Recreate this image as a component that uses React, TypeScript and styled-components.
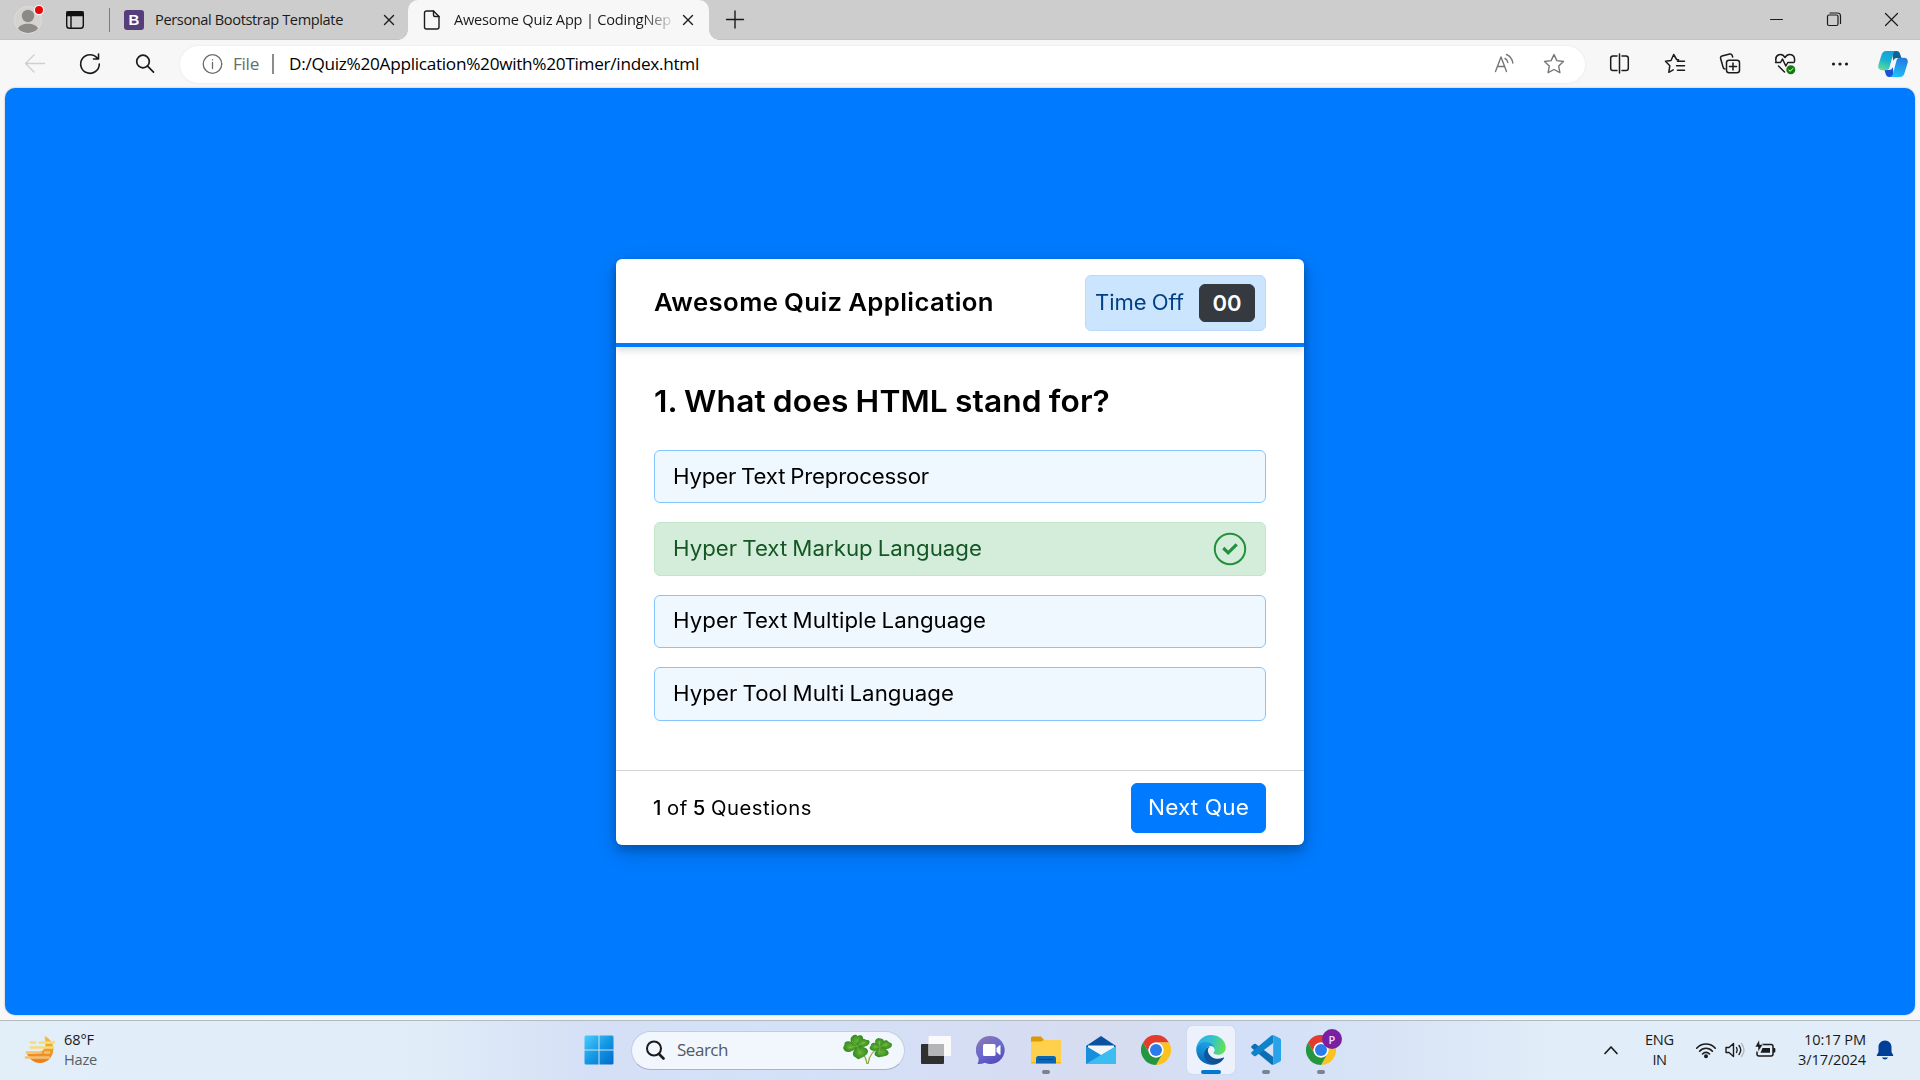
import React, { useLayoutEffect, useRef, useState } from "react";
import styled, { createGlobalStyle } from "styled-components";

const UI = `"Open Sans", "Noto Sans", sans-serif`;
const QUIZ = `Inter, "Noto Sans", sans-serif`;

const Global = createGlobalStyle`
  *, *::before, *::after { box-sizing: border-box; }
  html, body { margin: 0; padding: 0; overflow: hidden; }
  body { font-family: ${UI}; color: #000; }
  svg { display: block; flex: none; }
`;

/* Text run tracked so that it fills a given measure; stretch widens the letters. */
const Run = styled.span<{ $w: number; $spacing: number; $stretch: number }>`
  display: block;
  flex: none;
  width: ${(p) => p.$w / p.$stretch}px;
  margin-right: ${(p) => p.$w - p.$w / p.$stretch}px;
  white-space: pre;
  letter-spacing: ${(p) => p.$spacing}px;
  ${(p) => (p.$stretch !== 1 ? `transform: scaleX(${p.$stretch}); transform-origin: 0 50%;` : "")}
`;

function Tracked({ width, stretch = 1, children }: { width: number; stretch?: number; children: React.ReactNode }) {
  const ref = useRef<HTMLSpanElement>(null);
  const [spacing, setSpacing] = useState(0);
  useLayoutEffect(() => {
    const el = ref.current;
    if (!el) return;
    const range = document.createRange();
    range.selectNodeContents(el);
    const natural = range.getBoundingClientRect().width;
    const count = (el.textContent || "").length;
    setSpacing((width - natural) / stretch / count);
  }, [width, stretch]);
  return (
    <Run ref={ref} $w={width} $spacing={spacing} $stretch={stretch}>
      {children}
    </Run>
  );
}

/* ---------- window shell ---------- */

const Screen = styled.div`
  width: 1920px;
  height: 1080px;
  display: flex;
  flex-direction: column;
  background: #f7f7f7;
  overflow: hidden;
`;

const TabStrip = styled.div`
  height: 40px;
  display: flex;
  align-items: center;
  background: #cdcdcd;
  box-shadow: inset 0 -1px 0 #c3c3c3;
`;

const Tab = styled.div<{ $active?: boolean }>`
  position: relative;
  height: 40px;
  width: ${(p) => (p.$active ? 301 : 298)}px;
  display: flex;
  align-items: center;
  padding-left: 14px;
  border-radius: 10px 10px 0 0;
  background: ${(p) => (p.$active ? "#f7f7f7" : "transparent")};
  font-size: 14.6px;
  line-height: 20px;
  color: #1b1b1b;
  &::before,
  &::after {
    content: "";
    display: ${(p) => (p.$active ? "block" : "none")};
    position: absolute;
    bottom: 0;
    width: 10px;
    height: 10px;
  }
  &::before {
    left: -10px;
    background: radial-gradient(circle at 0 0, transparent 9.5px, #f7f7f7 10px);
  }
  &::after {
    right: -10px;
    background: radial-gradient(circle at 100% 0, transparent 9.5px, #f7f7f7 10px);
  }
`;

const TabTitle = styled.div<{ $ml: number; $fade?: boolean }>`
  margin-left: ${(p) => p.$ml}px;
  margin-right: auto;
  padding-bottom: 2px;
  ${(p) => (p.$fade ? "mask-image: linear-gradient(90deg, #000 188px, transparent 222px);" : "")}
`;

const TabClose = styled.div<{ $mr: number }>`
  margin-right: ${(p) => p.$mr}px;
`;

const Divider = styled.div`
  width: 1px;
  height: 24px;
  margin-left: 22px;
  background: #7b7b7b;
`;

const WindowButtons = styled.div`
  margin-left: auto;
  margin-right: 12px;
  display: flex;
  gap: 28px;
`;

const Toolbar = styled.div`
  height: 48px;
  display: flex;
  align-items: center;
  padding: 0 0 0 20px;
`;

const IconRow = styled.div<{ $gap: number }>`
  display: flex;
  align-items: center;
  gap: ${(p) => p.$gap}px;
`;

const AddressBar = styled.div`
  width: 1405px;
  height: 37px;
  margin: 0 20px;
  padding: 0 16px 0 18px;
  display: flex;
  align-items: center;
  border-radius: 19px;
  background: #fff;
  box-shadow: 0 0 3px rgba(0, 0, 0, 0.07);
  font-size: 17.2px;
  line-height: 24px;
`;

const Scheme = styled.div`
  margin-left: 5px;
  color: #6b6b6b;
`;

const Bar = styled.div`
  width: 2px;
  height: 20px;
  margin: 0 15px 0 13px;
  background: #8c8c8c;
`;

const Spacer = styled.div`
  flex: 1;
`;

const CopilotSlot = styled.div`
  margin-left: -2px;
`;

const Page = styled.main`
  width: 1910px;
  height: 927px;
  margin: 0 5px 5px;
  padding-top: 171px;
  display: flex;
  justify-content: center;
  align-items: flex-start;
  border-radius: 10px;
  background: #007bff;
  box-shadow: 0 0 2px rgba(0, 0, 0, 0.3);
`;

/* ---------- quiz card ---------- */

const Card = styled.section`
  width: 688px;
  height: 586px;
  display: flex;
  flex-direction: column;
  border-radius: 6px;
  background: #fff;
  font-family: ${QUIZ};
  word-spacing: -0.07em;
  box-shadow: 0 5px 10px rgba(0, 0, 0, 0.2), 0 7px 25px rgba(0, 0, 0, 0.19);
`;

const CardHeader = styled.header`
  height: 88px;
  display: flex;
  align-items: center;
  justify-content: space-between;
  padding: 0 38px;
  border-bottom: 4px solid #007bff;
  border-radius: 6px 6px 0 0;
  box-shadow: 0 4px 6px rgba(0, 0, 0, 0.12);
`;

const Title = styled.h1`
  margin: 2px 0 0;
  font-size: 24.5px;
  line-height: 36px;
  font-weight: 600;
`;

const Timer = styled.div`
  width: 181px;
  height: 56px;
  margin-top: 3px;
  padding: 0 10px 0 9px;
  display: flex;
  align-items: center;
  justify-content: space-between;
  border: 1px solid #b8daff;
  border-radius: 6px;
  background: #cce5ff;
  color: #004085;
  font-size: 21px;
`;

const Seconds = styled.div`
  width: 56px;
  height: 38px;
  display: flex;
  align-items: center;
  justify-content: center;
  border: 1px solid #343a40;
  border-radius: 6px;
  background: #343a40;
  color: #fff;
  font-size: 22px;
  font-weight: 600;
`;

const CardBody = styled.div`
  height: 423px;
  padding: 32px 38px 0;
`;

const Question = styled.h2`
  margin: 0 0 27px;
  height: 44px;
  font-size: 30.5px;
  line-height: 44px;
  font-weight: 600;
`;

const Options = styled.div`
  display: flex;
  flex-direction: column;
  gap: 19px;
`;

const Option = styled.div<{ $correct?: boolean }>`
  height: 53.4px;
  padding: 0 18px;
  display: flex;
  align-items: center;
  justify-content: space-between;
  border: 1px solid ${(p) => (p.$correct ? "#c3e6cb" : "#84c5fe")};
  border-radius: 6px;
  background: ${(p) => (p.$correct ? "#d4edda" : "#f0f8ff")};
  color: ${(p) => (p.$correct ? "#155724" : "#000")};
  font-size: 21px;
  line-height: 30px;
`;

const CardFooter = styled.footer`
  height: 75px;
  display: flex;
  align-items: center;
  justify-content: space-between;
  padding: 0 38px 0 37px;
  border-top: 1px solid #d3d3d3;
  font-size: 19.5px;
  b { font-weight: 500; }
`;

const NextButton = styled.button`
  width: 135px;
  height: 50px;
  padding: 0 0 2px;
  display: flex;
  align-items: center;
  justify-content: center;
  border: 1px solid #007bff;
  border-radius: 6px;
  background: #007bff;
  color: #fff;
  font: 400 21.5px ${QUIZ};
`;

/* ---------- taskbar ---------- */

const Taskbar = styled.footer`
  height: 60px;
  display: grid;
  grid-template-columns: 575px 778px 1fr;
  border-top: 1px solid #b4bac2;
  background: linear-gradient(90deg, #e2eef8 0, #e0edf8 420px, #d5dff6 590px, #d3e2f8 760px, #d5def5 930px, #d7dcf0 1100px, #d3e0f7 1250px, #d8e3f6 1380px, #e1edf8 1560px, #e2edf8 100%);
  font-size: 14.6px;
  line-height: 20px;
  color: #1a1a1a;
`;

const Weather = styled.div`
  display: flex;
  align-items: center;
  padding: 0 0 1px 24px;
`;

const Stack = styled.div<{ $ml?: number; $align?: string }>`
  display: flex;
  flex-direction: column;
  padding-bottom: 3px;
  margin-left: ${(p) => p.$ml || 0}px;
  align-items: ${(p) => p.$align || "flex-start"};
`;

const Muted = styled.div`
  color: #56606a;
`;

const Apps = styled.div`
  display: flex;
  align-items: center;
  gap: 7px;
  padding-bottom: 1px;
`;

const AppSlot = styled.div<{ $active?: boolean }>`
  width: 48px;
  height: 48px;
  position: relative;
  display: flex;
  align-items: center;
  justify-content: center;
  border-radius: 5px;
  background: ${(p) => (p.$active ? "#ecf1fb" : "transparent")};
  box-shadow: ${(p) => (p.$active ? "0 0 1px #aab4c8" : "none")};
`;

const Running = styled.i<{ $active?: boolean }>`
  position: absolute;
  bottom: 0;
  left: 50%;
  width: ${(p) => (p.$active ? 20 : 8)}px;
  height: 4px;
  transform: translateX(-50%);
  border-radius: 2px;
  background: ${(p) => (p.$active ? "#0078d4" : "#7d828c")};
`;

const ProfileBadge = styled.span`
  position: absolute;
  top: 3px;
  right: 3px;
  width: 20px;
  height: 20px;
  display: flex;
  align-items: center;
  justify-content: center;
  border-radius: 50%;
  background: #7b1fa2;
  color: #f0dcf5;
  font: 600 11px ${UI};
`;

const SearchBox = styled.div`
  width: 274px;
  height: 39px;
  margin-left: 1px;
  padding: 0 11px 0 13px;
  display: flex;
  align-items: center;
  border: 1px solid #c4cce3;
  border-bottom-color: #a9b2cb;
  border-radius: 20px;
  background: #f2f6fd;
  color: #55585f;
  font-size: 17px;
`;

const SearchLabel = styled.div`
  margin-left: 12px;
  margin-right: auto;
`;

const Tray = styled.div`
  display: flex;
  align-items: center;
  justify-content: flex-end;
  padding: 0 26px 1px 0;
`;

const TrayIcons = styled.div`
  display: flex;
  gap: 7px;
  margin: 0 21px 0 21px;
`;

const Bell = styled.div`
  margin-left: 10px;
`;

/* ---------- drawings ---------- */

type IconProps = { w?: number; h?: number; children: React.ReactNode; sw?: number; color?: string };
const Icon = ({ w = 30, h = 30, children, sw = 1.4, color = "#1b1b1b" }: IconProps) => (
  <svg width={w} height={h} viewBox={`0 0 ${w} ${h}`} fill="none" stroke={color} strokeWidth={sw} strokeLinecap="round" strokeLinejoin="round">
    {children}
  </svg>
);

const Cross = () => (
  <Icon w={12} h={12}>
    <path d="M1.500 1.500l9 9M10.500 1.500l-9 9" />
  </Icon>
);

const STAR = "M15 5.600l2.900 6 6.600.9-4.800 4.600 1.200 6.600-5.900-3.200-5.900 3.200 1.200-6.600-4.800-4.600 6.600-.9z";

const Chrome = () => (
  <svg width="30" height="30" viewBox="0 0 48 48">
    <path fill="#e33b2e" d="M3.200 12A24 24 0 0 1 44.800 12H24A12 12 0 0 0 13.600 30z" />
    <path fill="#fcc31e" d="M44.800 12H24A12 12 0 0 1 34.400 30L24 48A24 24 0 0 0 44.800 12z" />
    <path fill="#24963f" d="M3.200 12L13.600 30A12 12 0 0 0 34.400 30L24 48A24 24 0 0 1 3.200 12z" />
    <circle cx="24" cy="24" r="12" fill="#fff" />
    <circle cx="24" cy="24" r="9.600" fill="#2c7bea" />
  </svg>
);

const Edge = () => (
  <svg width="30" height="30" viewBox="0 0 256 260">
    <defs>
      <linearGradient id="e1" x1="60" y1="180" x2="240" y2="180" gradientUnits="userSpaceOnUse">
        <stop offset="0" stopColor="#0c59a4" />
        <stop offset="1" stopColor="#114a8b" />
      </linearGradient>
      <linearGradient id="e2" x1="100" y1="80" x2="50" y2="240" gradientUnits="userSpaceOnUse">
        <stop offset="0" stopColor="#1b9de2" />
        <stop offset="0.5" stopColor="#1386d2" />
        <stop offset="1" stopColor="#0564b4" />
      </linearGradient>
      <linearGradient id="e3" x1="20" y1="60" x2="245" y2="120" gradientUnits="userSpaceOnUse">
        <stop offset="0" stopColor="#2fb0e6" />
        <stop offset="0.500" stopColor="#35c5c6" />
        <stop offset="1" stopColor="#66e155" />
      </linearGradient>
    </defs>
    <path fill="url(#e1)" d="M235.680 195.460a93.730 93.730 0 0 1-10.540 4.710 101.870 101.870 0 0 1-35.900 6.460c-47.320 0-88.540-32.550-88.540-74.320A31.480 31.480 0 0 1 117.130 105c-42.800 1.800-53.800 46.400-53.800 72.530 0 73.880 68.090 81.370 82.760 81.370 7.910 0 19.840-2.300 27-4.560l1.310-.44a128.340 128.340 0 0 0 66.600-52.800 4 4 0 0 0-5.320-5.640z" />
    <path fill="url(#e2)" d="M105.730 241.420A79.200 79.200 0 0 1 83 220.080a80.720 80.720 0 0 1 29.500-120.790c3.120-1.470 8.450-4.130 15.540-4a32.350 32.350 0 0 1 25.690 13 31.880 31.880 0 0 1 6.360 18.660c0-.21 24.460-79.600-80-79.600-43.900 0-80 41.660-80 78.210a130.150 130.150 0 0 0 12.110 56 128 128 0 0 0 156.380 67.110 75.550 75.550 0 0 1-62.780-8z" />
    <path fill="url(#e3)" d="M152.330 148.860c-.81 1.050-3.300 2.500-3.300 5.660 0 2.610 1.700 5.120 4.720 7.230 14.380 10 41.490 8.680 41.560 8.680a59.560 59.560 0 0 0 30.270-8.350A61.380 61.380 0 0 0 256 109.170c.26-22.410-8-37.310-11.340-43.910C223.460 23.840 177.720 0 128 0A128 128 0 0 0 0 126.200c.48-36.540 36.800-66.050 80-66.050 3.500 0 23.460.34 42 10.070 16.340 8.580 24.900 18.940 30.850 29.210 6.180 10.670 7.280 24.150 7.280 29.520s-2.740 13.330-7.800 19.910z" />
  </svg>
);

const VsCode = () => (
  <svg width="30" height="30" viewBox="0 0 100 100">
    <path fill="#0b6fb8" d="M2 37l8-7q3-2 6 0l58 43v26l-6-1L2 43q-3-3 0-6z" />
    <path fill="#0f82cc" d="M2 63l8 7q3 2 6 0l58-43V1l-6 1L2 57q-3 3 0 6z" />
    <path fill="#28a3ea" d="M70 99q4 1 6 0l20-10q4-2 4-6V17q0-4-4-6L76 1q-2-1-6 0 4 1 4 5v88q0 4-4 5z" />
  </svg>
);

const Copilot = () => (
  <svg width="30" height="28" viewBox="0 0 30 28">
    <defs>
      <linearGradient id="c1" x1="12" y1="1" x2="5" y2="20" gradientUnits="userSpaceOnUse">
        <stop offset="0" stopColor="#12a0e0" />
        <stop offset="0.500" stopColor="#1cb1cf" />
        <stop offset="1" stopColor="#5bdc98" />
      </linearGradient>
      <linearGradient id="c2" x1="26" y1="8" x2="20" y2="27" gradientUnits="userSpaceOnUse">
        <stop offset="0" stopColor="#2876e2" />
        <stop offset="1" stopColor="#1bc0f7" />
      </linearGradient>
    </defs>
    <path fill="#10638f" d="M14 1h4.500c2 0 3 1 3.600 3l1.300 4h-4c-2.500 0-3.500 1-4.200 3z" />
    <path fill="#1e50d8" d="M15.500 27h-4.200c-2 0-3-1-3.600-3L6.500 20h4.200c2.300 0 3.500-1 4.200-3z" />
    <path fill="url(#c1)" d="M8 1h10.500c-2 0-2.800 1.200-3.400 3.200L11.500 17.500c-.6 1.800-1.600 2.700-3.500 2.700H4C1 20.200-.4 18 .4 15L3.300 5.500C4.200 2.500 5.500 1 8 1z" />
    <path fill="url(#c2)" d="M22 27H11.500c2 0 2.800-1.200 3.400-3.200L18.500 10.500c.6-1.800 1.600-2.700 3.500-2.700h4c3 0 4.400 2.200 3.600 5.200L26.700 22.500c-.9 3-2.200 4.500-4.700 4.500z" />
  </svg>
);

const Shamrocks = () => (
  <svg width="50" height="32" viewBox="0 0 50 32">
    <defs>
      <radialGradient id="leaf">
        <stop offset="0" stopColor="#69b234" />
        <stop offset="1" stopColor="#348b22" />
      </radialGradient>
    </defs>
    <g fill="none" stroke="#8aad3c" strokeWidth="1.300">
      <path d="M14 13c5 4 9 9 10 17M37 14c-6 2-11 7-12 16" />
    </g>
    <g fill="url(#leaf)">
      <path d="M14 12.500C7 11 6 4 9.500 2c2-2 4-1 5 0 4-2 7 1 5 5z" />
      <path d="M13.500 12.500c1-7 6-9 9-7 1 1 3 0 4 1.500 1 4-5 7-12 6z" />
      <path d="M14 12.500C9 6 1.500 6 1.500 10c0 2-2 3-1 5 2 4.500 8 4 14-2z" />
      <path d="M14 12c-5 5-5 10-2 11 2 1 3 3 4 2 4-2 9-4 9-8 0-3-6-5-11-5z" />
      <path d="M37 13.500c-6-3-6-8-2.500-9 1-1 2 0 3 0 4 0 5 5 0 9z" />
      <path d="M37 13.500c0-6 6-8.500 8-6.500 0 1 4 2 4 3.500 0 4-6 6-12 3.500z" />
      <path d="M37 13.500c-3-6.500-9-5.500-9-2.500 0 1-2 2-1 4 2 3 7 2 10-1z" />
      <path d="M37 13c-5 3-7 8-4 9 1 0 2 2 4 1 3 0 4-1 5-1 6-1 5-7-5-9z" />
    </g>
    <path d="M14 12L9 7M14 12l8-4M14 12l-9 2M14 12l3 8M37 13l-1-6M37 13l7-3M37 13l-6 0M37 13l-1 7" stroke="#96ca58" strokeWidth=".7" opacity=".7" />
  </svg>
);

/* ---------- sections ---------- */

const options = [
  { text: "Hyper Text Preprocessor", width: 256 },
  { text: "Hyper Text Markup Language", width: 309, correct: true },
  { text: "Hyper Text Multiple Language", width: 313 },
  { text: "Hyper Tool Multi Language", width: 281 },
];

function Tabs() {
  return (
    <TabStrip>
      <svg width="46" height="40" viewBox="0 0 46 40">
        <circle cx="28" cy="20" r="13.500" fill="#d5d3d0" stroke="#dedddb" />
        <circle cx="28" cy="16" r="6.200" fill="#8c8a87" />
        <path d="M18 28.500c2-6.500 18-6.500 20 0a13.500 13.500 0 0 1-20 0z" fill="#8c8a87" />
        <circle cx="39" cy="10" r="4.600" fill="#e8070b" stroke="#f5f5f5" strokeWidth="1.200" />
      </svg>
      <svg width="41" height="40" viewBox="46 0 41 40" fill="none" stroke="#111" strokeWidth="1.400">
        <rect x="66.700" y="11.700" width="16.600" height="16.600" rx="2.800" />
        <path d="M67 12h16v3.500H67z" fill="#111" />
        <path d="M71 15v13" />
      </svg>
      <Divider />
      <Tab>
        <svg width="21" height="20" viewBox="0 0 21 20">
          <rect width="20" height="20" rx="3" fill="#563d7c" />
          <text x="10" y="15.200" fill="#fff" fontFamily="Liberation Sans, sans-serif" fontSize="15" fontWeight="700" textAnchor="middle">B</text>
        </svg>
        <TabTitle $ml={10}>
          <Tracked width={188}>Personal Bootstrap Template</Tracked>
        </TabTitle>
        <TabClose $mr={13}><Cross /></TabClose>
      </Tab>
      <Tab $active>
        <Icon w={20} h={22}>
          <path d="M4.500 2h7L17 7.500V18a2 2 0 0 1-2 2H4.500a2 2 0 0 1-2-2V4a2 2 0 0 1 2-2z" />
          <path d="M11.500 2v4a1.500 1.500 0 0 0 1.500 1.500h4" />
        </Icon>
        <TabTitle $ml={12} $fade>
          <Tracked width={217}>Awesome Quiz App | CodingNep</Tracked>
        </TabTitle>
        <TabClose $mr={15}><Cross /></TabClose>
      </Tab>
      <Icon w={52} h={40}>
        <path d="M26 11v17M17.500 19.500h17" />
      </Icon>
      <WindowButtons>
        <Icon h={40} sw={1}><path d="M8.500 19.500h12" /></Icon>
        <Icon h={40} sw={1.200}>
          <rect x="7.500" y="15" width="10.500" height="10.500" rx="1.500" />
          <path d="M10 13h7.500a3 3 0 0 1 3 3v7.500" />
        </Icon>
        <Icon h={40} sw={1.200}><path d="M7.500 13.500l12 12M19.500 13.500l-12 12" /></Icon>
      </WindowButtons>
    </TabStrip>
  );
}

function Tools() {
  return (
    <Toolbar>
      <IconRow $gap={25}>
        <Icon color="#cfcfcf"><path d="M24.500 14.500H6M14 6l-8.500 8.500L14 23" /></Icon>
        <Icon sw={1.600}><path d="M22.500 9.500A9.300 9.300 0 1 0 24.300 15M23.500 5v5h-5" /></Icon>
        <Icon sw={1.700}><circle cx="13" cy="12.500" r="6.300" /><path d="M17.600 17.200l5.900 5.900" /></Icon>
      </IconRow>
      <AddressBar>
        <Icon color="#6b6b6b" sw={1.300}>
          <circle cx="14.500" cy="15" r="9.300" /><path d="M14.500 13.500v6M14.500 10.600v.3" />
        </Icon>
        <Scheme><Tracked width={26}>File</Tracked></Scheme>
        <Bar />
        <Tracked width={410}>D:/Quiz%20Application%20with%20Timer/index.html</Tracked>
        <Spacer />
        <IconRow $gap={19}>
          <Icon color="#767676">
            <path d="M5.500 22.500L11 8l5.500 14.500M7.300 17.500h7.400" />
            <path d="M15 9.500c1.500.7 2.500 2 2.800 4M16.500 5.500c3.500 1.500 5.700 4.500 6.300 8.500" />
          </Icon>
          <Icon color="#767676"><path d={STAR} /></Icon>
        </IconRow>
      </AddressBar>
      <IconRow $gap={25}>
        <Icon sw={1.500}>
          <path d="M12 7H8a2.300 2.300 0 0 0-2.300 2.300v10A2.300 2.300 0 0 0 8 21.600h4M17 7h4a2.300 2.300 0 0 1 2.300 2.300v10a2.300 2.300 0 0 1-2.300 2.300h-4M14.500 5v19" />
        </Icon>
        <Icon sw={1.500}>
          <path d="M18.500 10.800l-1.900-.3L13.700 5.500l-2.700 6-5.500.8 4.300 4.500-1 6.500 4.400-2.400M17.500 12.300h7M16.500 16.800h8M17.500 21.300h7" />
        </Icon>
        <Icon sw={1.500}>
          <rect x="11.500" y="11.200" width="13" height="12.500" rx="2.500" />
          <path d="M18 14v7M14.500 17.500h7M17.700 8l-.6-1.700A2 2 0 0 0 14.700 5L7 7a2 2 0 0 0-1.400 2.500l2.600 9c.3 1 .9 1.500 1.800 1.500" />
        </Icon>
        <Icon sw={1.500}>
          <path d="M6 12.500C4.500 5 12 3.500 15 8.500 18 3.500 25.500 5 24.500 12.500M5.500 13.500h5l2-3.500 3.300 7 2-3.500H24M8.500 17l6 6" />
          <circle cx="20.800" cy="20.800" r="4.500" fill="#107c10" stroke="none" />
          <path d="M18.900 21l1.300 1.300 2.700-2.800" stroke="#fff" strokeWidth="1" />
        </Icon>
        <Icon><g fill="#1b1b1b" stroke="none"><circle cx="8.500" cy="15" r="1.600" /><circle cx="15" cy="15" r="1.600" /><circle cx="21.500" cy="15" r="1.600" /></g></Icon>
        <CopilotSlot><Copilot /></CopilotSlot>
      </IconRow>
    </Toolbar>
  );
}

function Quiz() {
  return (
    <Card>
      <CardHeader>
        <Title><Tracked width={340} stretch={1.05}>Awesome Quiz Application</Tracked></Title>
        <Timer>
          <Tracked width={89} stretch={1.05}>Time Off</Tracked>
          <Seconds>00</Seconds>
        </Timer>
      </CardHeader>
      <CardBody>
        <Question><Tracked width={456} stretch={1.04}>1. What does HTML stand for?</Tracked></Question>
        <Options>
          {options.map((o) => (
            <Option key={o.text} $correct={o.correct}>
              <Tracked width={o.width} stretch={1.06}>{o.text}</Tracked>
              {o.correct && (
                <svg width="34" height="34" viewBox="0 0 34 34" fill="none" stroke="#23903c">
                  <circle cx="17" cy="17" r="15.200" strokeWidth="2" />
                  <path d="M10.300 16l4.900 4.800 8.500-8.500" strokeWidth="3.200" />
                </svg>
              )}
            </Option>
          ))}
        </Options>
      </CardBody>
      <CardFooter>
        <Tracked width={159} stretch={1.04}><b>1</b> of <b>5</b> Questions</Tracked>
        <NextButton><Tracked width={101} stretch={1.05}>Next Que</Tracked></NextButton>
      </CardFooter>
    </Card>
  );
}

function WindowsBar() {
  return (
    <Taskbar>
      <Weather>
        <svg width="32" height="30" viewBox="0 0 32 30">
          <defs>
            <linearGradient id="sun" x1="0" y1="0" x2="0" y2="1">
              <stop offset="0" stopColor="#f6bd38" /><stop offset="1" stopColor="#ef7b18" />
            </linearGradient>
          </defs>
          <path d="M20.500 1C30 5 32 16 26 23.500 20 30 8 30 3 19c8 0 18-1 18.500-9 .2-3-.5-6-1-9z" fill="url(#sun)" />
          <g stroke="#f7dc78" strokeWidth="2.700" strokeLinecap="round">
            <path d="M7 7.500h4M16 7.500h14M7 12.500h22" /><path d="M3 17.500h14M21 17.500h4M2 22.500h23" stroke="#efc276" />
          </g>
        </svg>
        <Stack $ml={8}>
          <Tracked width={30}>68°F</Tracked>
          <Muted><Tracked width={33}>Haze</Tracked></Muted>
        </Stack>
      </Weather>
      <Apps>
        <AppSlot>
          <svg width="30" height="30" viewBox="0 0 30 30">
            <defs><linearGradient id="win" x1="0" y1="0" x2="30" y2="30" gradientUnits="userSpaceOnUse"><stop offset="0" stopColor="#4cceff" /><stop offset=".5" stopColor="#1598e2" /><stop offset="1" stopColor="#0068cc" /></linearGradient></defs>
            <path fill="url(#win)" d="M2 .5h12.500v14H.5V2Q.5.500 2 .500zM15.500.5H28q1.500 0 1.500 1.500v12.500h-14zM.5 15.500h14v14H2q-1.500 0-1.500-1.500zM15.500 15.500h14V28q0 1.500-1.500 1.500H15.500z" />
          </svg>
        </AppSlot>
        <SearchBox>
          <Icon w={20} h={20} sw={2}><circle cx="9" cy="8.500" r="7" /><path d="M14 14l4.500 4.500" strokeWidth="2.600" /></Icon>
          <SearchLabel><Tracked width={51}>Search</Tracked></SearchLabel>
          <Shamrocks />
        </SearchBox>
        <AppSlot>
          <svg width="30" height="30" viewBox="0 0 30 30">
            <rect y="9" width="23" height="20" rx="1" fill="#303030" />
            <rect x="7.500" y="1" width="22.500" height="20" rx="1" fill="#fafafa" />
            <rect x="7.500" y="9" width="15.500" height="12" fill="#b4b5b7" />
          </svg>
        </AppSlot>
        <AppSlot>
          <svg width="30" height="30" viewBox="0 0 30 30">
            <defs><linearGradient id="chat" x1="5" y1="0" x2="20" y2="30" gradientUnits="userSpaceOnUse"><stop offset="0" stopColor="#8f76ae" /><stop offset=".5" stopColor="#6a6bce" /><stop offset="1" stopColor="#5348b8" /></linearGradient></defs>
            <path fill="url(#chat)" d="M15 1a14 14 0 1 1-6 26.800Q5 29.500 1.500 29q1.500-3 1-6A14 14 0 0 1 15 1z" />
            <rect x="7" y="9" width="12.500" height="12" rx="1.500" fill="#fff" /><path d="M20.500 13l3.500-3q.5 0 .5 1v8q0 1-.5 1l-3.500-3z" fill="#fff" />
          </svg>
        </AppSlot>
        <AppSlot>
          <svg width="30" height="28" viewBox="0 0 30 28">
            <path fill="#dc9900" d="M0 2q0-1.500 1.500-1.500H10L13 4h17v6H0z" />
            <path fill="#ffd04c" d="M0 5.500h10L13 4h17v22.500q0 1-1 1H1q-1 0-1-1z" />
            <path fill="#f7b90c" d="M0 26h30v.5q0 1-1 1H1q-1 0-1-1z" />
            <path fill="#0a67b5" d="M5 27.500v-5q0-2.500 2.500-2.500h15q2.500 0 2.500 2.500v5z" />
            <path stroke="#07457d" d="M8 23.500h14" />
          </svg>
          <Running />
        </AppSlot>
        <AppSlot>
          <svg width="30" height="28" viewBox="0 0 30 28">
            <path fill="#0a519e" d="M0 10L15 0l15 10v3H0z" />
            <path fill="#f4f5f7" d="M2 9.500h26V19H2z" />
            <path fill="#198fdc" d="M0 10l15 9 7 4 8 5H0z" />
            <path fill="#3bbdf2" d="M30 10L0 28h30z" />
          </svg>
        </AppSlot>
        <AppSlot><Chrome /></AppSlot>
        <AppSlot $active><Edge /><Running $active /></AppSlot>
        <AppSlot><VsCode /><Running /></AppSlot>
        <AppSlot><Chrome /><Running /><ProfileBadge>P</ProfileBadge></AppSlot>
      </Apps>
      <Tray>
        <Icon w={16} h={12} sw={1.700}><path d="M2 9.500l6-6.500 6 6.500" /></Icon>
        <Stack $ml={26} $align="center">
          <Tracked width={29}>ENG</Tracked>
          <Tracked width={14}>IN</Tracked>
        </Stack>
        <TrayIcons>
          <Icon w={22} h={20} sw={1.600}>
            <path d="M1.700 8.200c5-5.600 13.600-5.600 18.600 0M4.600 11.200c3.500-3.900 9.300-3.900 12.800 0M7.500 14c2-2.200 5-2.200 7 0" />
            <circle cx="11" cy="16.300" r="1.200" fill="#1b1b1b" />
          </Icon>
          <Icon w={22} h={20}>
            <path d="M2 7.500h3L9.500 3.500v13L5 12.500H2z" /><path d="M12.500 7.500q1.500 2.500 0 5M15 5.500q3.500 4.500 0 9" />
            <path d="M17.500 3.500q5 6.500 0 13" stroke="#b3bac1" />
          </Icon>
          <Icon w={24} h={20} sw={1.500}>
            <path d="M9 4.500h9a2 2 0 0 1 2 2v7.500a2 2 0 0 1-2 2H6a2 2 0 0 1-2-2v-2M20.800 8.700v3h.8v-3z" />
            <path d="M9.500 8h7.500v4.800H7.500z" fill="#1b1b1b" stroke="none" />
            <path d="M6 0L2 7h3v5l5-7.500H7z" fill="#1b1b1b" stroke="#e2edf8" strokeWidth=".6" />
          </Icon>
        </TrayIcons>
        <Stack $align="flex-end">
          <Tracked width={62}>10:17 PM</Tracked>
          <Tracked width={68}>3/17/2024</Tracked>
        </Stack>
        <Bell>
          <svg width="18" height="22" viewBox="0 0 18 22">
            <path fill="#003f98" d="M9 1.500c4 0 6.500 3 6.500 6.500v5l1.700 3.200V17H.8v-.8L2.500 13V8C2.500 4.500 5 1.500 9 1.500zM6 18.500h6q-.8 2-3 2t-3-2z" />
          </svg>
        </Bell>
      </Tray>
    </Taskbar>
  );
}

export default function App() {
  return (
    <>
      <Global />
      <Screen>
        <Tabs />
        <Tools />
        <Page><Quiz /></Page>
        <WindowsBar />
      </Screen>
    </>
  );
}
